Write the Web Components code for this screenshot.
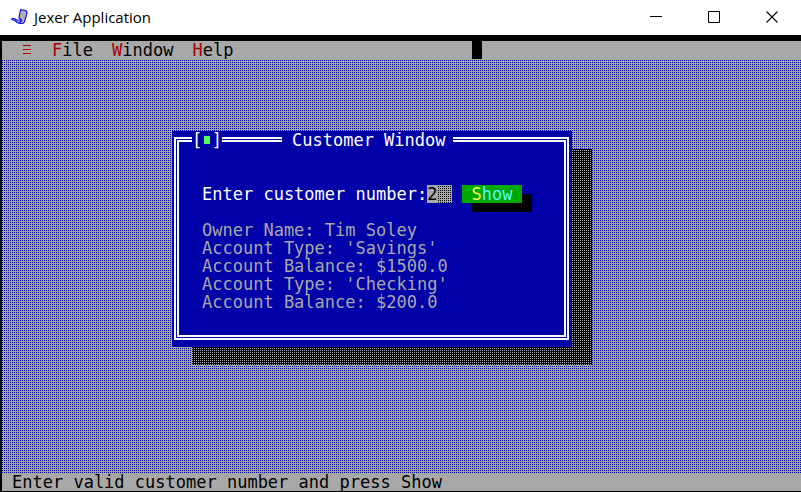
<!DOCTYPE html>
<html lang="en">
<head>
<meta charset="utf-8">
<title>Jexer Application</title>
<style>
html, body { height: 100%; margin: 0; background: #000; }
</style>
</head>
<body>
<jexer-app></jexer-app>
<script>
const define = (name, html) => {
  const template = document.createElement('template');
  template.innerHTML = html;
  customElements.define(name, class extends HTMLElement {
    constructor() {
      super();
      this.attachShadow({ mode: 'open' }).append(template.content.cloneNode(true));
    }
  });
};

define('title-bar', `
<style>
:host { display: flex; align-items: center; height: 35px; box-sizing: border-box; padding-bottom: 2px; background: #fff; color: #000; font: 15px/20px "Open Sans", "Noto Sans", sans-serif; }
.logo { width: 18px; height: 18px; margin: 0 5px 0 11px; }
h1 { flex: 1; margin: 0; font: inherit; }
button { width: 58px; height: 33px; padding: 0; border: 0; background: none; display: grid; place-items: center; }
</style>
<svg class="logo" viewBox="0 0 18 18" aria-hidden="true"><path d="M9 4L10 1.5L15.500 3L16 5L13.500 14L12 15.500L8.500 15.500L10.500 12.500L8 9.500Z" fill="#b0b0b0" stroke="#1616ee" stroke-width="1.2"/><path d="M1 10.500L3 10.500L6 12L10 12L9 15.500L6 14.500L4 12.500L1 11.500Z" fill="#8ca6ee" stroke="#1616ee" stroke-width="1.2"/></svg>
<h1><slot></slot></h1>
<button aria-label="Minimize"><svg width="12" height="12"><path d="M0 5.5H12" stroke="#000"/></svg></button>
<button aria-label="Maximize"><svg width="12" height="12"><path d="M.5.5H11.5V11.5H.5Z" fill="none" stroke="#000"/></svg></button>
<button aria-label="Close"><svg width="12" height="12"><path d="M.5.5L11.5 11.5M11.5.5L.5 11.5" stroke="#000" stroke-width="1.1"/></svg></button>
`);

define('menu-item', `
<style>
:host { display: block; }
button { padding: 0; border: 0; background: none; color: #000; font: inherit; display: block; }
button::first-letter { color: #a80000; }
</style>
<button><slot></slot></button>
`);

define('menu-bar', `
<style>
:host { display: flex; gap: 19px; height: 18px; padding-left: 21px; background: #a8a8a8; color: #000; }
.system { width: 10px; padding: 0; border: 0; background: none; display: grid; align-items: center; justify-items: start; }
.cursor { width: 10px; height: 18px; margin-left: 220px; background: #000; }
</style>
<button class="system" aria-label="System menu"><svg width="8" height="10"><path d="M0 .5H8M0 4.5H8M0 8.5H8" stroke="#a80000"/></svg></button>
<slot></slot>
<span class="cursor"></span>
`);

define('tui-window', `
<style>
:host { display: block; box-sizing: border-box; background: #0000a8; color: #fff; padding: 6px 3px 7px 2px; position: relative; }
.outer { border: 2px solid #fff; padding: 1px; }
.inner { border: 2px solid #fff; padding: 43px 0 24px 23px; }
header { position: absolute; top: 0; left: 20px; right: 20px; display: flex; height: 18px; }
.close { width: 30px; padding: 0; border: 0; background: #0000a8; color: #fff; font: inherit; display: flex; }
.close i { flex: 1; height: 18px; display: grid; place-items: center; }
.close i::before { content: ""; width: 6px; height: 8px; background: #54fc54; }
h2 { margin: 0 0 0 60px; padding: 0 7px 0 10px; background: #0000a8; font: inherit; }
</style>
<div class="outer"><div class="inner"><slot></slot></div></div>
<header><button class="close" aria-label="Close window"><span>[</span><i></i><span>]</span></button><h2><slot name="title"></slot></h2></header>
`);

define('customer-form', `
<style>
:host { display: block; }
form { display: flex; margin: 0 0 18px; height: 18px; }
.field { display: flex; width: 250px; }
input { flex: 1; min-width: 0; height: 18px; box-sizing: border-box; padding: 0; border: 0; border-radius: 0; outline: 0; color: #000; font: inherit;
 background: linear-gradient(#a8a8a8, #a8a8a8) 0 0 / 10px 18px no-repeat, linear-gradient(#a8a8a8 50%, transparent 50%) 0 0 / 2px 2px, linear-gradient(90deg, #a8a8a8 50%, #000 50%) 0 0 / 2px 2px; }
button { margin-left: 10px; width: 60px; height: 18px; padding: 0; border: 0; background: #00a800; color: #54fcfc; font: inherit; box-shadow: 10px 9px #000; }
button b { font-weight: inherit; color: #fcfc54; }
p { margin: 0; color: #a8a8a8; }
</style>
<form onsubmit="return false"><div class="field"><label for="n">Enter customer number:</label><input id="n" value="2"></div><button><b>S</b>how</button></form>
<p>Owner Name: Tim Soley</p>
<p>Account Type: 'Savings'</p>
<p>Account Balance: $1500.0</p>
<p>Account Type: 'Checking'</p>
<p>Account Balance: $200.0</p>
`);

define('tui-desktop', `
<style>
:host { flex: 1; display: block; padding: 72px 0 0 170px; background: linear-gradient(#a8a8a8 50%, transparent 50%) 0 0 / 2px 2px, linear-gradient(90deg, #0000a8 50%, #a8a8a8 50%) 0 0 / 2px 2px; }
.stage { width: 400px; position: relative; }
.stage::before { content: ""; position: absolute; inset: 18px -20px -18px 20px; background: linear-gradient(#000 50%, transparent 50%) 0 0 / 2px 2px, linear-gradient(90deg, #a8a8a8 50%, #000 50%) 0 0 / 2px 2px; }
</style>
<div class="stage"><slot></slot></div>
`);

define('status-bar', `
<style>:host { display: block; height: 18px; padding-left: 10px; background: #a8a8a8; color: #000; }</style>
<slot></slot>
`);

define('jexer-app', `
<style>
:host { display: flex; flex-direction: column; height: 100vh; background: #000; }
main { flex: 1; display: flex; flex-direction: column; margin: 6px 0 1px 2px; font: 17px/18px "DejaVu Sans Mono", "Liberation Mono", monospace; white-space: nowrap; }
</style>
<title-bar>Jexer Application</title-bar>
<main>
<menu-bar><menu-item>File</menu-item><menu-item>Window</menu-item><menu-item>Help</menu-item></menu-bar>
<tui-desktop><tui-window><span slot="title">Customer Window</span><customer-form></customer-form></tui-window></tui-desktop>
<status-bar>Enter valid customer number and press Show</status-bar>
</main>
`);
</script>
</body>
</html>
